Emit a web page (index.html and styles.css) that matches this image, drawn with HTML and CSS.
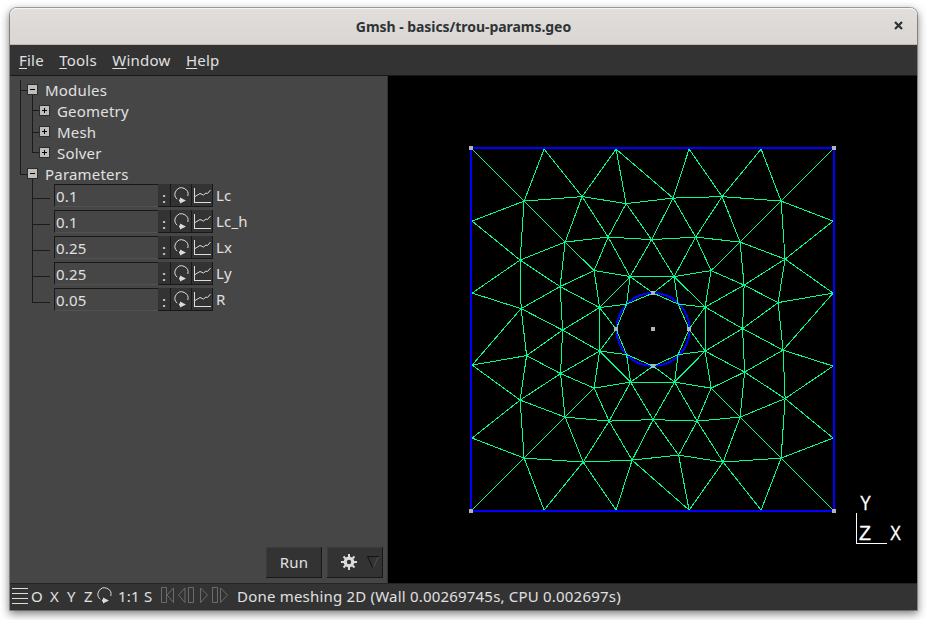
FILE: index.html
```html
<!DOCTYPE html>
<html lang="en">
<head>
<meta charset="utf-8">
<title>Gmsh - basics/trou-params.geo</title>
<link rel="stylesheet" href="styles.css">
</head>
<body>
<svg width="0" height="0" class="defs">
  <symbol id="loop" viewBox="0 0 15 17">
    <path d="M3.200 12.200A6.500 6.500 0 1 1 13.800 9" fill="none" stroke="#dcdcdc"/>
    <path d="M6 10.500l6 3-6 3v-2H5v-2h1z" fill="#dcdcdc"/>
  </symbol>
  <symbol id="chart" viewBox="0 0 17 15">
    <path d="M.5 0v14.5H17" fill="none" stroke="#dcdcdc" shape-rendering="crispEdges"/>
    <path d="M1 8.500L6 5.500l3.500 1.500 2.500-2 1.500.5L16.500 2" fill="none" stroke="#dcdcdc"/>
  </symbol>
</svg>
<div class="window">
  <header class="titlebar"><span class="title">Gmsh - basics/trou-params.geo</span>
    <svg class="close" width="9" height="9"><path d="M1 1l7 7M8 1L1 8" stroke="#2e3436" stroke-width="2.200"/></svg>
  </header>
  <nav class="menubar"><span><u>F</u>ile</span><span><u>T</u>ools</span><span><u>W</u>indow</span><span><u>H</u>elp</span></nav>
  <main class="content">
    <section class="panel">
      <svg class="branches" width="60" height="230" shape-rendering="crispEdges">
        <path d="M10.500 4V98.500H17M10.500 14.500H17M22.500 19V76.500H29M22.500 34.500H29M22.500 56.500H29M22.500 103V226.500H40M22.500 122.500H40M22.500 148.500H40M22.500 174.500H40M22.500 200.500H40" fill="none" stroke="#1b1b1b"/>
      </svg>
      <div class="node"><i class="box"></i>Modules</div>
      <div class="node child"><i class="box plus"></i>Geometry</div>
      <div class="node child"><i class="box plus"></i>Mesh</div>
      <div class="node child"><i class="box plus"></i>Solver</div>
      <div class="node"><i class="box"></i>Parameters</div>
      <div class="params">
        <div class="param"><span class="field">0.1</span><span class="btn colon">:</span><span class="btn"><svg class="loop"><use href="#loop"/></svg></span><span class="btn"><svg class="chart"><use href="#chart"/></svg></span><label>Lc</label></div>
        <div class="param"><span class="field">0.1</span><span class="btn colon">:</span><span class="btn"><svg class="loop"><use href="#loop"/></svg></span><span class="btn"><svg class="chart"><use href="#chart"/></svg></span><label>Lc_h</label></div>
        <div class="param"><span class="field">0.25</span><span class="btn colon">:</span><span class="btn"><svg class="loop"><use href="#loop"/></svg></span><span class="btn"><svg class="chart"><use href="#chart"/></svg></span><label>Lx</label></div>
        <div class="param"><span class="field">0.25</span><span class="btn colon">:</span><span class="btn"><svg class="loop"><use href="#loop"/></svg></span><span class="btn"><svg class="chart"><use href="#chart"/></svg></span><label>Ly</label></div>
        <div class="param"><span class="field">0.05</span><span class="btn colon">:</span><span class="btn"><svg class="loop"><use href="#loop"/></svg></span><span class="btn"><svg class="chart"><use href="#chart"/></svg></span><label>R</label></div>
      </div>
      <div class="actions">
        <span class="action">Run</span>
        <span class="action gear">
          <svg width="16" height="16" fill="none" stroke="#dcdcdc"><circle cx="8" cy="8" r="3.800" stroke-width="3.200"/><path d="M8 0v3M8 13v3M0 8h3M13 8h3M2.500 2.500l2 2M11.500 11.500l2 2M13.500 2.500l-2 2M2.500 13.500l2-2" stroke-width="2"/></svg>
          <svg width="12" height="13" fill="none"><path d="M11.500 .5L6 12" stroke="#505050"/><path d="M12 .5H.5L6 12" stroke="#121212"/></svg>
        </span>
      </div>
    </section>
    <section class="view">
      <svg id="scene" viewBox="388 76 529 507" width="529" height="507"></svg>
    </section>
  </main>
  <footer class="status">
    <svg class="burger" width="16" height="16" shape-rendering="crispEdges"><path d="M0 .5h16M0 5.500h16M0 10.500h16M0 15.500h16" stroke="#dcdcdc"/></svg>
    <span class="s-o">O</span><span class="s-x">X</span><span class="s-y">Y</span><span class="s-z">Z</span>
    <svg class="loop"><use href="#loop"/></svg>
    <span class="s-one">1:1</span><span class="s-s">S</span>
    <svg class="player" width="68" height="17" fill="none" stroke="#6c6c6c"><path d="M.5 .5h5v15h-5zM12.500 1v14.500L6 8zM24 1v14.500L17.500 8zM27.500 .5h5v15h-5zM39.500 1v14.500L46.500 8zM51.500 .5h5v15h-5zM59.500 1v14.500L66.500 8z"/></svg>
    <span class="message">Done meshing 2D (Wall 0.00269745s, CPU 0.002697s)</span>
  </footer>
</div>
<script src="mesh.js"></script>
</body>
</html>
```
FILE: styles.css
```css
* { box-sizing: border-box; }
body {
  margin: 0;
  height: 620px;
  padding: 8px 10px 10px;
  overflow: hidden;
  background: #fff;
  font: 15px/21px "Noto Sans", sans-serif;
  letter-spacing: .2px;
  color: #e0e0e0;
}
svg { display: block; flex: none; }
.defs { position: absolute; }
.window {
  width: 907px;
  height: 602px;
  display: flex;
  flex-direction: column;
  border-radius: 7px 7px 0 0;
  box-shadow: 0 0 0 1px rgba(0, 0, 0, .3), 0 3px 9px 1px rgba(0, 0, 0, .5);
}
.titlebar {
  height: 37px;
  display: flex;
  align-items: center;
  border-radius: 7px 7px 0 0;
  background: linear-gradient(#e1dedb, #dad6d2);
  box-shadow: inset 0 1px #f6f5f4, inset 0 -1px #bfb8b1;
  color: #2e3436;
  font-size: 14px;
  font-weight: bold;
  letter-spacing: -.05px;
}
.title { flex: 1; text-align: center; padding-left: 23px; }
.close { margin: 0 14px 2px 0; }
.menubar {
  height: 31px;
  display: flex;
  gap: 15.5px;
  padding: 5px 9px 0;
  background: #333;
  border-bottom: 1px solid #181818;
}
u { text-decoration: underline; text-decoration-thickness: 1px; text-underline-offset: 2px; }
.content { height: 507px; display: flex; }
.panel {
  position: relative;
  width: 378px;
  padding-top: 4px;
  background: #464646;
  border-right: 1px solid #333;
}
.branches { position: absolute; left: 0; top: 0; }
.node {
  position: relative;
  height: 21px;
  display: flex;
  align-items: center;
  padding-left: 17px;
}
.child { padding-left: 29px; }
.box {
  width: 11px;
  height: 11px;
  margin: 0 7px 2px 0;
  border: 1px solid #2c2c2c;
  background: linear-gradient(#000, #000) center / 5px 1px no-repeat #bebebe;
}
.plus { background: linear-gradient(#000, #000) center / 5px 1px no-repeat, linear-gradient(#000, #000) center / 1px 5px no-repeat #bebebe; }
.params { margin-top: -1px; padding-left: 44px; }
.param { position: relative; display: flex; height: 26px; }
.field {
  width: 104px;
  height: 23px;
  padding-left: 1px;
  line-height: 22px;
  border: solid #181818;
  border-width: 1px 0 0 1px;
  border-bottom: 1px solid #525252;
}
.btn {
  width: 21px;
  height: 23px;
  display: flex;
  justify-content: center;
  background: #333;
  border-right: 1px solid #181818;
  border-bottom: 1px solid #181818;
  padding-top: 3px;
}
.colon { width: 13px; }
.loop { width: 15px; height: 17px; }
.chart { width: 17px; height: 15px; margin-top: 1px; }
.param label { margin-left: 3px; line-height: 23px; }
.actions { display: flex; gap: 5px; margin: 233px 0 0 256px; }
.action {
  width: 56px;
  height: 31px;
  display: flex;
  align-items: center;
  justify-content: center;
  background: #333;
  border: solid #181818;
  border-width: 0 1px 1px 0;
  box-shadow: inset 1px 1px #3c3c3c;
  padding-left: 1px;
}
.gear { gap: 10px; padding-left: 11px; }
.view { width: 529px; background: #000; }
.status {
  height: 27px;
  display: flex;
  align-items: center;
  padding: 0 0 2px 2px;
  background: #333;
  border-top: 1px solid #242424;
}
.status > span { flex: none; white-space: nowrap; }
.s-o { width: 19px; margin-left: 3px; }
.s-x { width: 17px; }
.s-y { width: 17px; }
.s-z { width: 13px; }
.s-one { width: 26px; margin-left: 6px; }
.s-s { width: 17px; }
.player { margin-top: -2px; }
.status .loop { margin-top: -2px; }
.message { margin-left: 8px; }
```
FILE: mesh.js
```javascript
const points = {
  c1: [471, 148], c2: [834, 148], c3: [471, 511], c4: [834, 511],
  t1: [544, 149], t2: [616, 149], t3: [689, 149], t4: [761, 149],
  l1: [472, 221], l2: [472, 293], l3: [472, 365], l4: [472, 438],
  r1: [833, 221], r2: [833, 293], r3: [833, 366], r4: [833, 438],
  b1: [544, 510], b2: [616, 510], b3: [689, 510], b4: [761, 510],
  a: [524, 201], b: [582, 196.5], c: [626, 203.5], d: [673, 198], e: [722, 196.5], f: [781, 201],
  g: [520, 260], h: [565, 242], i: [608, 237], j: [651.5, 239.5], k: [695.5, 237], l: [740, 242], m: [785, 259],
  n: [521, 308.5], o: [560, 286.5], p: [594, 270.5], q: [630, 276.5], r: [674, 276.5], s: [711, 270.5], t: [744, 285], u: [778, 302.5],
  v: [599.5, 307.5], w: [562.5, 330], x: [705, 307], y: [742.5, 328.5],
  N: [653, 293], E0: [689, 329], S0: [653, 366], W0: [616, 329],
  nw: [626.5, 304], ne: [678, 304], sw: [626.5, 354.5], se: [678, 354.5],
  A: [526.5, 355.5], B: [520, 400], C: [560.5, 373.5], D: [599.5, 351], E: [594, 388], F: [630.5, 382],
  G: [565, 417], H: [609, 421], I: [653, 419.5], J: [524, 458], K: [583, 462], L: [632, 460], M: [678.5, 455],
  X: [723, 462], O: [781, 458], P: [740, 417], Q: [697, 421], R: [711, 388], S: [674.5, 382], T: [705, 351],
  U: [744.5, 372], V: [785, 398.5], W: [783, 350]
};

// Each row: a vertex followed by the neighbours it is joined to.
const edges = `
c1 a|c2 f|c3 J|c4 O
t1 a b|t2 b c d|t3 d e|t4 e f
l1 a g|l2 g n|l3 n A B|l4 B J
r1 f m|r2 m u W|r3 W V|r4 V O
b1 J K|b2 K L|b3 L M X|b4 X O
a b g h|b c h i|c d i j|d e j k|e f k l|f l m
h g i o p|i j p q|j k q r|k l r s|l m s t
g n o|m t u|n o w A|o p v w|p q v|q r v N nw|r s x N ne|s t x|t u x y|u y W
v w D nw W0|x y T ne E0|y T U W|w A C D
N nw ne|W0 nw sw|S0 sw se|E0 ne se
A B C|B C G J|C D E G|D E F sw W0|E F G H|F H I S sw S0
G H J K|H I K L|I L M Q S|J K|K L|L M|M X Q|X O P Q|O P V
P Q R U V|Q R S|R S T U|S T se S0|T U se E0|U V W|V W`;

let d = "";
for (const row of edges.trim().split(/[|\n]/)) {
  const [from, ...to] = row.trim().split(" ");
  for (const name of to) d += `M${points[from]}L${points[name]}`;
}
const dot = ([x, y]) => `<rect x="${x - 2}" y="${y - 2}" width="4" height="4" fill="#b4b4b4"/>`;
const corners = ["c1", "c2", "c3", "c4", "N", "E0", "S0", "W0"].map(n => points[n]);
document.getElementById("scene").innerHTML = `
<g shape-rendering="crispEdges" fill="none">
  <g stroke="#00f" stroke-width="2"><rect x="471" y="148" width="363" height="363"/><circle cx="653" cy="329.500" r="36.500"/></g>
  <path d="${d}" stroke="#00ff8c" transform="translate(.1 .1)"/>
  ${[...corners, [653, 329]].map(dot).join("")}
  <path d="M856.500 513V543.500H887" stroke="#fff"/>
</g>
<g fill="#fff" stroke="#fff" stroke-width=".3" font-family="Liberation Sans, sans-serif" font-size="21" letter-spacing="0">
  <text x="860" y="510" textLength="11" lengthAdjust="spacingAndGlyphs">Y</text>
  <text x="859" y="540" textLength="12" lengthAdjust="spacingAndGlyphs">Z</text>
  <text x="890" y="540" textLength="11" lengthAdjust="spacingAndGlyphs">X</text>
</g>`;
```
